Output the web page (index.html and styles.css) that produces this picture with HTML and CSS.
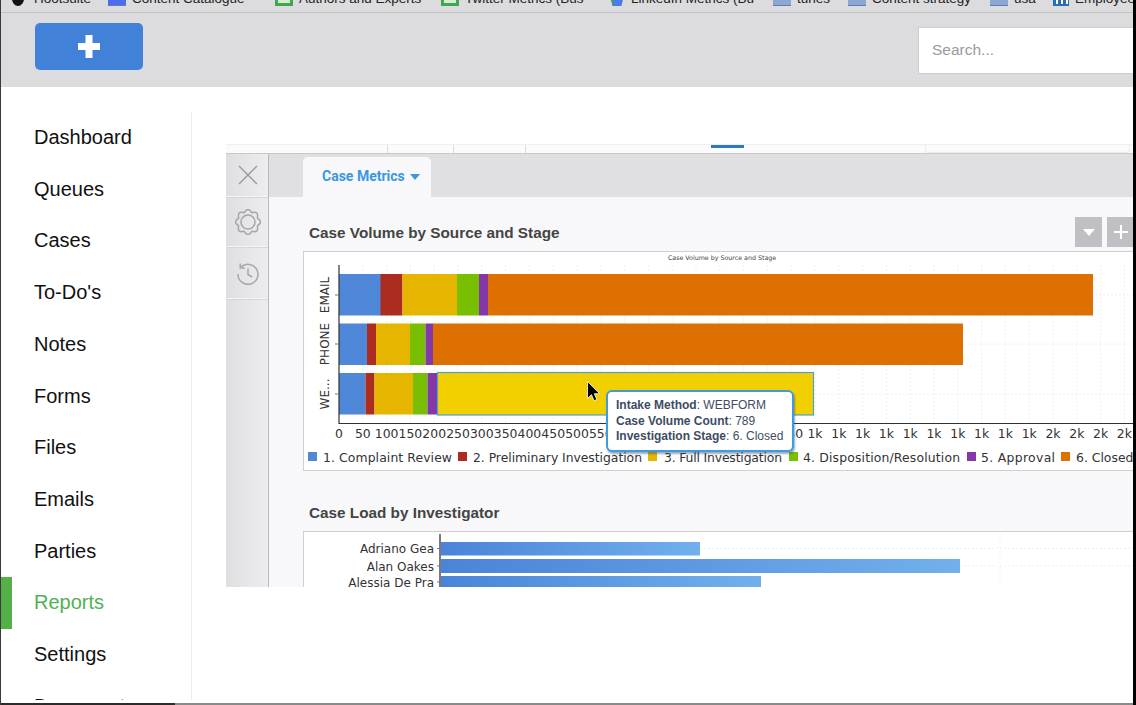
FILE: index.html
```html
<!DOCTYPE html>
<html lang="en">
<head>
<meta charset="utf-8">
<title>Reports - Case Metrics</title>
<link rel="stylesheet" href="styles.css">
</head>
<body>
<div class="screen">
  <div class="bookmarks">
    <div class="bm"><span class="ic ic-hoot"></span><span class="hoot-label">Hootsuite</span></div>
    <div class="bm"><span class="ic ic-doc"></span><span>Content Catalogue</span></div>
    <div class="bm"><span class="ic ic-sheet"></span><span>Authors and Experts</span></div>
    <div class="bm"><span class="ic ic-sheet"></span><span>Twitter Metrics (Bus</span></div>
    <div class="bm"><span class="ic ic-drive"></span><span>LinkedIn Metrics (Bu</span></div>
    <div class="bm"><span class="ic ic-folder"></span><span>tunes</span></div>
    <div class="bm"><span class="ic ic-folder"></span><span>Content strategy</span></div>
    <div class="bm"><span class="ic ic-folder"></span><span>usa</span></div>
    <div class="bm"><span class="ic ic-li"></span><span>Employee</span></div>
  </div>

  <header class="topbar">
    <button class="add-btn" type="button" aria-label="Add">
      <svg width="22" height="23" viewBox="0 0 22 23"><path d="M7.5 0h7v8h7.5v7h-7.5v8h-7v-8H0V8h7.5z" fill="#fff"/></svg>
    </button>
    <div class="search">Search...</div>
  </header>

  <div class="main">
    <nav class="sidebar">
      <a class="nav">Dashboard</a>
      <a class="nav">Queues</a>
      <a class="nav">Cases</a>
      <a class="nav">To-Do's</a>
      <a class="nav">Notes</a>
      <a class="nav">Forms</a>
      <a class="nav">Files</a>
      <a class="nav">Emails</a>
      <a class="nav">Parties</a>
      <a class="nav active">Reports</a>
      <a class="nav">Settings</a>
      <a class="nav">Document</a>
    </nav>

    <section class="content">
      <div class="panel">
        <div class="strip">
          <span class="seg seg-a"></span><span class="seg seg-b"></span><span class="seg seg-c"></span><span class="seg seg-d"></span>
          <span class="seg-blue"></span>
          <span class="seg-gap"></span>
          <span class="seg-box"></span>
        </div>
        <div class="panel-body">
          <aside class="rail">
            <div class="rail-cell cell-x">
              <svg width="20" height="20" viewBox="0 0 20 20"><path d="M1 1l18 18M19 1L1 19" fill="none" stroke="#9a9a9e" stroke-width="1.400"/></svg>
            </div>
            <div class="rail-cell cell-gear">
              <svg width="26" height="26" viewBox="0 0 24 24" fill="none" stroke="#a6a6aa" stroke-width="1.400" stroke-linejoin="round"><path d="M20.590 8.440Q26.500 12 20.590 15.560 22.250 22.250 15.560 20.590 12 26.500 8.440 20.590 1.750 22.250 3.410 15.560-2.500 12 3.410 8.440 1.750 1.750 8.440 3.410 12-2.500 15.560 3.410 22.250 1.750 20.590 8.440z"/><circle cx="12" cy="12" r="6.500"/></svg>
            </div>
            <div class="rail-cell cell-hist">
              <svg width="24" height="24" viewBox="0 0 24 24" fill="none" stroke="#a8a8ac" stroke-width="1.500"><path d="M4.600 5.600A10 10 0 1 1 2 12"/><path d="M4.200 1.500v4.600h4.600"/><path d="M12 6.500v6l4.200 2.500"/></svg>
            </div>
          </aside>
          <div class="report">
            <div class="tabs">
              <div class="tab"><span class="tab-label">Case Metrics</span><span class="caret"></span></div>
            </div>
            <div class="report-body">
              <div class="title-row">
                <h2 class="title">Case Volume by Source and Stage</h2>
                <div class="tools">
                  <button class="tool" type="button" aria-label="Menu"><span class="tool-caret"></span></button>
                  <button class="tool" type="button" aria-label="Add">
                    <svg width="14" height="14" viewBox="0 0 14 14"><path d="M7 0v14M0 7h14" stroke="#fff" stroke-width="2"/></svg>
                  </button>
                </div>
              </div>
              <div class="chart chart-one">
                <svg class="plot" width="830" height="218" viewBox="304 252 830 218">
                  <text class="c-title" x="722" y="259.500" text-anchor="middle">Case Volume by Source and Stage</text>
                  <path d="M362.800 265V423M386.600 265V423M410.400 265V423M434.200 265V423M458 265V423M481.800 265V423M505.600 265V423M529.400 265V423M553.200 265V423M577 265V423M600.800 265V423M624.600 265V423M648.400 265V423M672.200 265V423M696 265V423M719.800 265V423M743.600 265V423M767.400 265V423M791.200 265V423M815 265V423M838.800 265V423M862.600 265V423M886.400 265V423M910.200 265V423M934 265V423M957.800 265V423M981.600 265V423M1005.400 265V423M1029.200 265V423M1053 265V423M1076.800 265V423M1100.600 265V423M1124.400 265V423M339 295H1134M339 344H1134M339 394H1134" stroke="#f0f0f0" stroke-dasharray="2 2" fill="none"/>

                  <rect x="339" y="274" width="42" height="41.500" fill="#4f88d8"/>
                  <rect x="380.500" y="274" width="22" height="41.500" fill="#ac2d1f"/>
                  <rect x="402.500" y="274" width="54.500" height="41.500" fill="#e5b500"/>
                  <rect x="457" y="274" width="22" height="41.500" fill="#77bf00"/>
                  <rect x="479" y="274" width="9" height="41.500" fill="#8438a8"/>
                  <rect x="488" y="274" width="605" height="41.500" fill="#dd7000"/>

                  <rect x="339" y="323.500" width="28" height="41.500" fill="#4f88d8"/>
                  <rect x="367" y="323.500" width="9" height="41.500" fill="#ac2d1f"/>
                  <rect x="376" y="323.500" width="34" height="41.500" fill="#e5b500"/>
                  <rect x="410" y="323.500" width="15.500" height="41.500" fill="#77bf00"/>
                  <rect x="425.500" y="323.500" width="8" height="41.500" fill="#8438a8"/>
                  <rect x="433" y="323.500" width="530" height="41.500" fill="#dd7000"/>

                  <rect x="339" y="373" width="26.500" height="41.500" fill="#4f88d8"/>
                  <rect x="365.500" y="373" width="9" height="41.500" fill="#ac2d1f"/>
                  <rect x="374.500" y="373" width="38.500" height="41.500" fill="#e5b500"/>
                  <rect x="413" y="373" width="14.500" height="41.500" fill="#77bf00"/>
                  <rect x="427.500" y="373" width="10" height="41.500" fill="#8438a8"/>
                  <rect x="437.500" y="372.500" width="376" height="42.500" fill="#f2d000" stroke="#4aa0d8" stroke-width="1.200"/>

                  <path d="M339 265V423.500H1134" fill="none" stroke="#333" stroke-width="1.200"/>
                  <path d="M335 295h4M335 344h4M335 394h4" stroke="#777"/>

                  <text class="c-axis" transform="translate(329 295) rotate(-90)" text-anchor="middle">EMAIL</text>
                  <text class="c-axis" transform="translate(329 344) rotate(-90)" text-anchor="middle">PHONE</text>
                  <text class="c-axis" transform="translate(329 394) rotate(-90)" text-anchor="middle">WE...</text>

                  <g class="c-ticks" text-anchor="middle">
                    <text x="339" y="438">0</text><text x="362.800" y="438">50</text><text x="386.600" y="438">100</text><text x="410.400" y="438">150</text><text x="434.200" y="438">200</text><text x="458" y="438">250</text><text x="481.800" y="438">300</text><text x="505.600" y="438">350</text><text x="529.400" y="438">400</text><text x="553.200" y="438">450</text><text x="577" y="438">500</text><text x="600.800" y="438">550</text><text x="791.200" y="438">950</text><text x="815" y="438">1k</text><text x="838.800" y="438">1k</text><text x="862.600" y="438">1k</text><text x="886.400" y="438">1k</text><text x="910.200" y="438">1k</text><text x="934" y="438">1k</text><text x="957.800" y="438">1k</text><text x="981.600" y="438">1k</text><text x="1005.400" y="438">1k</text><text x="1029.200" y="438">1k</text><text x="1053" y="438">2k</text><text x="1076.800" y="438">2k</text><text x="1100.600" y="438">2k</text><text x="1124.400" y="438">2k</text>
                  </g>

                  <rect x="308" y="452" width="9" height="9" fill="#4f88d8"/>
                  <text class="c-legend" x="323" y="461.500" textLength="129">1. Complaint Review</text>
                  <rect x="458" y="452" width="9" height="9" fill="#ac2d1f"/>
                  <text class="c-legend" x="473" y="461.500" textLength="169">2. Preliminary Investigation</text>
                  <rect x="648" y="452" width="9" height="9" fill="#e5b500"/>
                  <text class="c-legend" x="664" y="461.500" textLength="118">3. Full Investigation</text>
                  <rect x="789" y="452" width="9" height="9" fill="#77bf00"/>
                  <text class="c-legend" x="803" y="461.500" textLength="157">4. Disposition/Resolution</text>
                  <rect x="967" y="452" width="9" height="9" fill="#8438a8"/>
                  <text class="c-legend" x="981" y="461.500" textLength="74">5. Approval</text>
                  <rect x="1061" y="452" width="9" height="9" fill="#dd7000"/>
                  <text class="c-legend" x="1076" y="461.500">6. Closed</text>

                  <path d="M587.500 381.500v17l4-3.800 2.600 6 2.800-1.200-2.600-5.800h5.300z" fill="#000" stroke="#fff" stroke-width=".8"/>
                </svg>
                <div class="tooltip">
                  <div><b>Intake Method</b>: WEBFORM</div>
                  <div><b>Case Volume Count</b>: 789</div>
                  <div><b>Investigation Stage</b>: 6. Closed</div>
                </div>
              </div>

              <h2 class="title title-two">Case Load by Investigator</h2>
              <div class="chart chart-two">
                <svg class="plot" width="830" height="56" viewBox="304 532 830 56">
                  <defs>
                    <linearGradient id="barGrad" x1="0" x2="1" y1="0" y2="0">
                      <stop offset="0" stop-color="#4a84d8"/>
                      <stop offset="1" stop-color="#71b0ec"/>
                    </linearGradient>
                  </defs>
                  <path d="M700 548.500H1134M960 566H1134M1000 534V588" stroke="#f0f0f0" stroke-dasharray="2 2" fill="none"/>
                  <rect x="441" y="542" width="259" height="13.500" fill="url(#barGrad)"/>
                  <rect x="441" y="559" width="519" height="14" fill="url(#barGrad)"/>
                  <rect x="441" y="576" width="320" height="14" fill="url(#barGrad)"/>
                  <path d="M440 534V588" stroke="#222" stroke-width="1.200"/>
                  <path d="M437 548.500h3M437 566h3M437 582h3" stroke="#777"/>
                  <g class="c-axis" text-anchor="end">
                    <text x="434" y="553">Adriano Gea</text>
                    <text x="434" y="571">Alan Oakes</text>
                    <text x="434" y="587">Alessia De Pra</text>
                  </g>
                </svg>
              </div>
            </div>
          </div>
        </div>
      </div>
    </section>
  </div>

  <div class="bottom-edge"><span class="bottom-dark"></span></div>
</div>
</body>
</html>
```
FILE: styles.css
```css
* { box-sizing: border-box; }
html, body { margin: 0; padding: 0; height: 100%; background: #fff; overflow: hidden; }
body { font-family: "Liberation Sans", Arial, sans-serif; color: #111; }

.screen {
  width: 1136px;
  height: 705px;
  display: flex;
  flex-direction: column;
  border-left: 1px solid #3a3a3a;
  border-right: 3px solid #000;
  overflow: hidden;
}

/* browser bookmarks, cut by the top of the capture */
.bookmarks {
  flex: 0 0 13px;
  display: grid;
  grid-template-columns: 96px 167px 166px 166px 166px 75px 142px 63px 90px;
  padding-left: 11px;
  background: #dcdbdd;
  border-bottom: 1px solid #c2c1c4;
  overflow: hidden;
  white-space: nowrap;
  font-size: 13.500px;
  line-height: 15px;
  color: #222;
}
.bm { display: flex; gap: 6px; height: 15px; margin-top: -9px; align-items: center; }
.ic { flex: 0 0 18px; height: 15px; display: block; background: #8ea6d2; border-bottom: 1px solid #5f7cb3; }
.ic-hoot { flex-basis: 12px; background: #111; border: 0; border-radius: 50%; }
.hoot-label { margin-left: 4px; }
.ic-doc { background: #4d6df0; }
.ic-sheet { background: linear-gradient(#d8ecd8, #d8ecd8) center 3px / 12px 9px no-repeat, #3fa84a; border-bottom: 0; }
.ic-drive { background: linear-gradient(90deg, #3ca44f 0 35%, #4a7be8 35%); border-bottom: 0; clip-path: polygon(10% 0, 100% 0, 80% 100%, 30% 100%); }
.ic-li { flex-basis: 16px; background: repeating-linear-gradient(90deg, #2a6db0 0 3px, #fff 3px 5px); border-bottom: 2px solid #2a6db0; }

.topbar {
  flex: 0 0 74px;
  display: flex;
  justify-content: space-between;
  align-items: flex-start;
  background: #dcdbde;
}
.add-btn {
  width: 108px;
  height: 47px;
  margin: 10px 0 0 34px;
  display: flex;
  align-items: center;
  justify-content: center;
  background: #4181d8;
  border: 0;
  border-radius: 5px;
  box-shadow: 0 1px 0 #cfe0f5;
  padding: 0;
}
.search {
  width: 215px;
  height: 47px;
  margin-top: 14px;
  padding-left: 13px;
  background: #fff;
  border: 1px solid #cdcdd0;
  border-right: 0;
  font-size: 15.500px;
  line-height: 43px;
  color: #9a9a9a;
}

.main { flex: 1 1 0; min-height: 0; display: flex; }

.sidebar {
  flex: 0 0 191px;
  margin-top: 25px;
  margin-bottom: 3px;
  border-right: 1px solid #ececee;
  display: flex;
  flex-direction: column;
  overflow: hidden;
}
.nav {
  flex: 0 0 51.700px;
  display: block;
  font-size: 20px;
  line-height: 51.700px;
  color: #111;
  border-left: 11px solid transparent;
  padding-left: 22px;
}
.nav.active { color: #52b153; border-left-color: #55b049; }

.content { flex: 1 1 0; min-width: 0; padding: 57px 0 0 34px; }

.panel { height: 443px; display: flex; flex-direction: column; overflow: hidden; background: #f8f8fa; }

.strip {
  flex: 0 0 10px;
  display: flex;
  background: #fbfbfb;
  border-top: 1px solid #f0f0f2;
  border-bottom: 1px solid #c9c9cc;
}
.seg { display: block; border-right: 1px solid #dcdcde; }
.seg-a { width: 162px; }
.seg-b { width: 66px; }
.seg-c { width: 72px; }
.seg-d { width: 185px; border-right: 0; }
.seg-blue { width: 33px; height: 3px; background: #2f78c4; }
.seg-gap { width: 181px; }
.seg-box { width: 205px; border: 1px solid #ececee; border-top: 0; border-radius: 0 0 4px 4px; }

.panel-body { flex: 1 1 0; min-height: 0; display: flex; }

.rail {
  flex: 0 0 43px;
  display: flex;
  flex-direction: column;
  background: linear-gradient(90deg, #dfdfe2, #ededef);
  border-right: 1px solid #b9b9bc;
}
.rail-cell { display: flex; align-items: center; justify-content: center; padding-left: 2px; border-bottom: 1px solid #f4f4f5; box-shadow: 0 1px 0 #d6d6d9; }
.cell-x { height: 43px; }
.cell-gear { height: 50px; }
.cell-hist { height: 52px; padding-top: 2px; }

.report { flex: 1 1 0; min-width: 0; display: flex; flex-direction: column; }

.tabs { flex: 0 0 43px; display: flex; align-items: flex-end; padding-left: 34px; background: #e0e0e3; }
.tab {
  width: 128px;
  height: 40px;
  display: flex;
  align-items: center;
  gap: 5px;
  padding: 0 0 3px 19px;
  background: #f8f8fa;
  border-radius: 5px 5px 0 0;
}
.tab-label { font-family: Roboto, "Liberation Sans", sans-serif; font-weight: 700; font-size: 14px; color: #3a97e0; }
.caret { width: 0; height: 0; margin-top: 3px; border-left: 5.500px solid transparent; border-right: 5.500px solid transparent; border-top: 6px solid #3a97e0; }

.report-body { flex: 1 1 0; min-height: 0; padding-left: 34px; background: #f8f8fa; }

.title-row { height: 54px; display: flex; justify-content: space-between; align-items: flex-end; padding-bottom: 4px; }
.title { margin: 0; padding-left: 6px; font-size: 15.300px; line-height: 17px; font-weight: 700; color: #444; }
.title-row .title { margin-bottom: 6px; }
.title-two { margin-top: 33px; margin-bottom: 10px; }

.tools { display: flex; gap: 5px; margin-right: -1px; }
.tool {
  width: 27px;
  height: 30px;
  padding: 0;
  display: flex;
  align-items: center;
  justify-content: center;
  background: #c0bfc3;
  border: 0;
}
.tool-caret { width: 0; height: 0; border-left: 6.500px solid transparent; border-right: 6.500px solid transparent; border-top: 7px solid #fff; }

.chart { position: relative; background: #fff; border: 1px solid #cfcfd2; border-right: 0; overflow: hidden; }
.chart-one { height: 220px; overflow: visible; }
.chart-two { height: 70px; border-bottom: 0; }
.plot { display: block; }

.c-title { font-family: "DejaVu Sans", sans-serif; font-size: 6.300px; fill: #444; }
.c-axis { font-family: "DejaVu Sans", sans-serif; font-size: 12px; fill: #333; }
.c-ticks { font-family: "DejaVu Sans", sans-serif; font-size: 12.400px; fill: #333; }
.c-legend { font-family: "DejaVu Sans", sans-serif; font-size: 12.400px; fill: #333; }

.tooltip {
  position: absolute;
  left: 302px;
  top: 138px;
  width: 188px;
  height: 62px;
  padding: 6px 0 0 8px;
  background: #fff;
  border: 2px solid #3d9be0;
  border-radius: 6px;
  box-shadow: 1px 2px 2px rgba(40, 70, 110, .45);
  font-size: 12px;
  line-height: 15.500px;
  color: #3d4c63;
  white-space: nowrap;
}

.bottom-edge { flex: 0 0 2px; display: flex; background: #8a8a8a; }
.bottom-dark { width: 174px; background: #2c2c2c; }
```
